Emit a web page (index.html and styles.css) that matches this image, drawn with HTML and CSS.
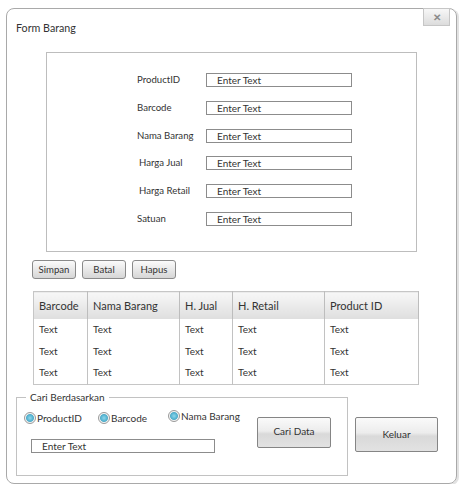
FILE: index.html
```html
<!DOCTYPE html>
<html lang="id">
<head>
  <meta charset="UTF-8">
  <title>Form Barang</title>
  <link rel="stylesheet" href="styles.css">
</head>
<body>

  <!-- potongan judul dokumen di atas -->
  <div class="doc-cut"><span>g</span></div>

  <div class="window">
    <div class="close-btn">&#x2715;</div>
    <div class="title">Form Barang</div>

    <!-- Input barang -->
    <div class="panel">
      <div class="form-grid">
        <div class="field-label">ProductID</div>
        <div class="text-input">Enter Text</div>
        <div class="field-label">Barcode</div>
        <div class="text-input">Enter Text</div>
        <div class="field-label">Nama Barang</div>
        <div class="text-input">Enter Text</div>
        <div class="field-label shift">Harga Jual</div>
        <div class="text-input">Enter Text</div>
        <div class="field-label shift">Harga Retail</div>
        <div class="text-input">Enter Text</div>
        <div class="field-label">Satuan</div>
        <div class="text-input">Enter Text</div>
      </div>
    </div>

    <div class="actions">
      <div class="btn">Simpan</div>
      <div class="btn">Batal</div>
      <div class="btn">Hapus</div>
    </div>

    <!-- Tabel data -->
    <table class="grid">
      <colgroup>
        <col style="width:54px">
        <col style="width:92px">
        <col style="width:53px">
        <col style="width:92px">
        <col style="width:94px">
      </colgroup>
      <tr>
        <th>Barcode</th><th>Nama Barang</th><th>H. Jual</th><th>H. Retail</th><th>Product ID</th>
      </tr>
      <tr>
        <td>Text</td><td>Text</td><td>Text</td><td>Text</td><td>Text</td>
      </tr>
      <tr>
        <td>Text</td><td>Text</td><td>Text</td><td>Text</td><td>Text</td>
      </tr>
      <tr>
        <td>Text</td><td>Text</td><td>Text</td><td>Text</td><td>Text</td>
      </tr>
    </table>

    <!-- Pencarian -->
    <div class="bottom">
      <div class="search-box">
        <span class="legend">Cari Berdasarkan</span>
        <div class="search-left">
          <div class="radio-row">
            <div class="radio-item w1"><span class="radio"></span>ProductID</div>
            <div class="radio-item w2"><span class="radio"></span>Barcode</div>
            <div class="radio-item raised"><span class="radio"></span>Nama Barang</div>
          </div>
          <div class="text-input search-input">Enter Text</div>
        </div>
        <div class="btn-big btn-cari">Cari Data</div>
      </div>
      <div class="btn-big btn-keluar">Keluar</div>
    </div>
  </div>

</body>
</html>
```

FILE: styles.css
```css
/* Reset & base */
* {
  margin: 0;
  padding: 0;
  box-sizing: border-box;
}

body {
  font-family: 'Lato', 'Open Sans', sans-serif;
  color: #333;
  background: #fff;
}

/* cut-off heading above the window */
.doc-cut {
  height: 8px;
  overflow: hidden;
  padding-left: 99px;
}

.doc-cut span {
  display: block;
  margin-top: -33px;
  font: 28px/32px 'Liberation Serif', serif;
  color: #222;
}

/* Window */
.window {
  position: relative;
  margin-left: 6px;
  width: 451px;
  height: 476px;
  border: 1px solid #a9a9a9;
  border-radius: 8px;
  box-shadow: 2px 1px 0 #e2e2e2;
}

.close-btn {
  position: absolute;
  top: -1px;
  right: 6px;
  width: 27px;
  height: 18px;
  border: 1px solid #c6c6c6;
  background: linear-gradient(#f7f7f7, #dcdcdc);
  color: #8a8a8a;
  font-size: 10px;
  font-weight: bold;
  line-height: 16px;
  text-align: center;
}

.title {
  padding: 12px 0 0 9px;
  font-size: 10.7px;
  line-height: 14px;
}

/* Form panel */
.panel {
  margin: 17px 0 0 39px;
  width: 371px;
  height: 200px;
  border: 1px solid #bdbdbd;
  padding: 20px 0 0 90px;
}

.form-grid {
  display: grid;
  grid-template-columns: 69px 146px;
  grid-auto-rows: 14px;
  row-gap: 13.8px;
}

.field-label {
  font-size: 9.6px;
  line-height: 13px;
}

.field-label.shift {
  padding-left: 2px;
}

.text-input {
  height: 14px;
  border: 1px solid #8c8c8c;
  padding-left: 10px;
  font-size: 10px;
  line-height: 12px;
  color: #333;
}

/* Buttons */
.actions {
  display: flex;
  gap: 6px;
  margin: 8px 0 0 25px;
}

.btn {
  width: 44px;
  height: 19px;
  border: 1px solid #8a8a8a;
  border-radius: 3px;
  background: linear-gradient(#fbfbfb, #d6d6d6);
  font-size: 9.6px;
  line-height: 17px;
  text-align: center;
}

/* Table */
.grid {
  margin: 12px 0 0 26px;
  width: 385px;
  border-collapse: collapse;
  border: 1px solid #c6c6c6;
  table-layout: fixed;
}

.grid th {
  height: 27px;
  padding-left: 5px;
  background: linear-gradient(#f7f7f7, #dedede);
  font-size: 11px;
  font-weight: normal;
  text-align: left;
  border-right: 1px solid #bdbdbd;
}

.grid td {
  height: 22px;
  padding-left: 5px;
  font-size: 10px;
  line-height: 12px;
  padding-bottom: 2px;
  border-right: 1px solid #c2c2c2;
}

/* Search section */
.bottom {
  display: flex;
  align-items: flex-start;
  margin: 12px 0 0 9px;
}

.search-box {
  position: relative;
  display: flex;
  width: 332px;
  height: 79px;
  border: 1px solid #c2c2c2;
}

.legend {
  position: absolute;
  top: -7px;
  left: 9px;
  padding: 0 4px;
  background: #fff;
  font-size: 10px;
  line-height: 12px;
}

.search-left {
  width: 240px;
  padding: 14px 0 0 7px;
}

.radio-row {
  display: flex;
  align-items: center;
  height: 12px;
  font-size: 10px;
}

.radio-item {
  display: flex;
  align-items: center;
  gap: 1px;
}

.radio-item.w1 { width: 74px; }
.radio-item.w2 { width: 70px; }
.radio-item.raised { margin-top: -4px; }

.radio {
  width: 12px;
  height: 12px;
  border-radius: 50%;
  border: 1px solid #9a9a9a;
  background: radial-gradient(circle, #8fd6ea 0, #55b4d2 3px, #5aafc9 3.6px, #f4f4f4 4.4px);
}

.search-input {
  width: 184px;
  margin: 15px 0 0 7px;
}

.btn-big {
  border: 1px solid #858585;
  border-radius: 2px;
  background: linear-gradient(#fafafa 0%, #ececec 45%, #d9d9d9 55%, #e2e2e2 100%);
  font-size: 10px;
  text-align: center;
}

.btn-cari {
  width: 74px;
  height: 31px;
  margin-top: 19px;
  line-height: 27px;
}

.btn-keluar {
  width: 83px;
  height: 35px;
  margin: 20px 0 0 7px;
  line-height: 33px;
}
```
